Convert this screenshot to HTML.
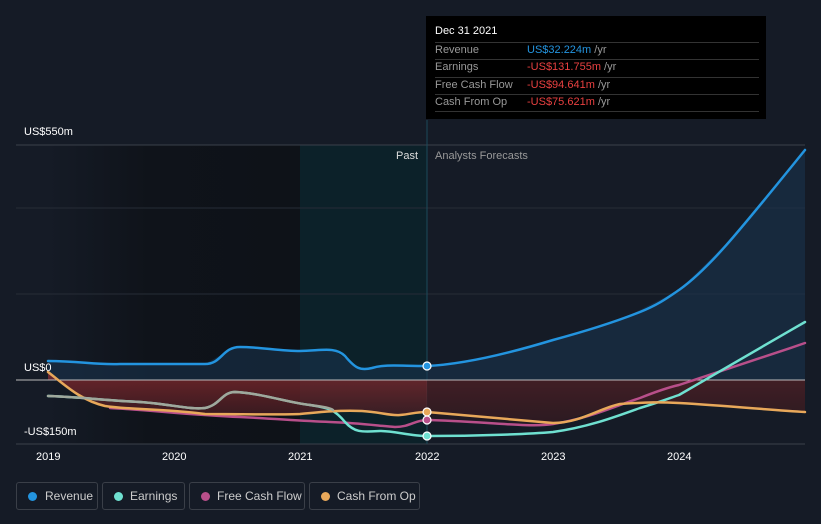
<!DOCTYPE html>
<html><head><style>
body{margin:0;width:821px;height:524px;background:#151b26;font-family:"Liberation Sans",sans-serif;overflow:hidden;position:relative}
.t{position:absolute;font-size:11px;color:#fff}
.leg{position:absolute;top:482px;height:28px;border:1px solid #3a3f48;border-radius:3px;color:#ccc;font-size:12px;line-height:27px;box-sizing:border-box;padding-left:27px;white-space:nowrap}
.leg i{position:absolute;left:11px;top:9px;width:9px;height:9px;border-radius:50%}
.tip{position:absolute;left:426px;top:16px;width:340px;height:103px;background:#000}
.tip div{position:absolute;left:9px;font-size:11px;color:#999}
.tip span{position:absolute;left:92px;white-space:nowrap}
</style></head><body>
<svg width="821" height="524" style="position:absolute;left:0;top:0">
<defs>
<linearGradient id="dk" x1="0" x2="1"><stop offset="0" stop-color="#151b26"/><stop offset="0.4" stop-color="#0f131a"/><stop offset="1" stop-color="#0e1218"/></linearGradient>
<linearGradient id="neg" x1="0" y1="0" x2="0" y2="1"><stop offset="0" stop-color="#8a2a2e"/><stop offset="1" stop-color="#3a1a20"/></linearGradient>
</defs>
<rect x="48" y="145" width="252" height="299" fill="url(#dk)"/>
<rect x="300" y="145" width="127" height="299" fill="#0c2129"/>
<line x1="16" y1="145" x2="805" y2="145" stroke="#3a404a"/>
<line x1="16" y1="208" x2="805" y2="208" stroke="#262c36"/>
<line x1="16" y1="294" x2="805" y2="294" stroke="#262c36"/>
<line x1="16" y1="444" x2="805" y2="444" stroke="#3a404a"/>
<line x1="427" y1="120" x2="427" y2="444" stroke="#1c4a5a"/>
<polygon points="48,361 80,362 110,365 174,364 205,364 235,347 300,352 333,350 362,370 395,365 427,366 480,358 553,340 620,320 679,290 740,230 805,150 805,380 48,380" fill="#1a3550" opacity="0.55"/>
<polygon points="48,380 805,380 805,412 679,403 620,404 553,423 427,412 395,415 362,411 300,414 205,414 174,410 110,408 80,395 48,372" fill="url(#neg)" opacity="0.75"/>
<polygon points="427,380 805,380 805,412 679,403 620,404 553,425 427,420" fill="#2a1a22" opacity="0.6"/>
<line x1="16" y1="380" x2="805" y2="380" stroke="#bbb" stroke-width="1"/>
<g fill="none" stroke-width="2.5" stroke-linejoin="round" stroke-linecap="round">
<path stroke="#2394df" d="M48,361 C80,361 95,365 120,364 L205,364 C222,364 222,347 240,347 C260,347 280,351 300,351 C320,351 335,346 345,356 C355,368 360,371 372,368 C385,364 400,366 427,366 C470,364 520,350 553,340 C590,330 620,320 640,312 C660,304 670,296 679,290 C710,268 740,230 805,150"/>
<path stroke="#b84f8a" d="M110,408 C150,410 190,415 240,417 C280,419 300,421 330,422 C360,423 380,426 395,427 C410,427 415,420 427,420 C480,421 530,428 553,424 C590,418 610,408 640,398 C660,390 670,387 679,385 C740,365 770,355 805,343"/>
<path stroke="#6fe0d0" d="M48,396 C80,397 100,400 140,402 C170,404 190,410 205,408 C220,405 222,392 235,392 C260,393 290,403 310,405 C330,408 335,410 345,422 C355,433 362,432 380,431 C395,431 410,436 427,436 C480,436 530,434 553,432 C590,427 620,415 640,408 C660,402 670,398 679,395 C740,360 770,342 805,322"/>
<path stroke="#e8a85a" d="M48,372 C65,385 80,400 105,406 C130,410 160,408 205,414 C240,414 280,415 300,414 C320,412 340,410 362,411 C380,412 390,416 400,415 C412,414 415,412 427,412 C480,417 520,420 553,423 C580,423 600,408 620,404 C650,402 660,402 679,403 C730,406 770,410 805,412"/>
<path stroke="#a0a89c" d="M48,396 C80,397 100,400 140,402 C170,404 190,410 205,408 C220,405 222,392 235,392 C260,393 290,403 310,405 C325,407 330,408 333,410"/>
</g>
<circle cx="427" cy="366" r="4" fill="#2394df" stroke="#fff" stroke-width="1.2"/>
<circle cx="427" cy="412" r="4" fill="#e8a85a" stroke="#fff" stroke-width="1.2"/>
<circle cx="427" cy="420" r="4" fill="#b84f8a" stroke="#fff" stroke-width="1.2"/>
<circle cx="427" cy="436" r="4" fill="#6fe0d0" stroke="#fff" stroke-width="1.2"/>
</svg>
<div class="t" style="left:24px;top:126px">US$550m</div>
<div class="t" style="left:24px;top:362px">US$0</div>
<div class="t" style="left:24px;top:426px">-US$150m</div>
<div class="t" style="left:396px;top:150px;color:#ddd">Past</div>
<div class="t" style="left:435px;top:150px;color:#999">Analysts Forecasts</div>
<div class="t" style="left:36px;top:451px">2019</div>
<div class="t" style="left:162px;top:451px">2020</div>
<div class="t" style="left:288px;top:451px">2021</div>
<div class="t" style="left:415px;top:451px">2022</div>
<div class="t" style="left:541px;top:451px">2023</div>
<div class="t" style="left:667px;top:451px">2024</div>
<div class="tip">
<div style="top:9px;color:#fff">Dec 31 2021</div>
<div style="top:26px;border-top:1px solid #333;width:324px;padding-top:1px">Revenue<span style="color:#2394df">US$32.224m <b style="font-weight:normal;color:#999">/yr</b></span></div>
<div style="top:43px;border-top:1px solid #333;width:324px;padding-top:1px">Earnings<span style="color:#e84040">-US$131.755m <b style="font-weight:normal;color:#999">/yr</b></span></div>
<div style="top:61px;border-top:1px solid #333;width:324px;padding-top:1px">Free Cash Flow<span style="color:#e84040">-US$94.641m <b style="font-weight:normal;color:#999">/yr</b></span></div>
<div style="top:78px;border-top:1px solid #333;border-bottom:1px solid #333;width:324px;padding:1px 0 3px">Cash From Op<span style="color:#e84040">-US$75.621m <b style="font-weight:normal;color:#999">/yr</b></span></div>
</div>
<div class="leg" style="left:16px;width:82px;padding-left:28px"><i style="background:#2394df"></i>Revenue</div>
<div class="leg" style="left:102px;width:83px"><i style="background:#6fe0d0"></i>Earnings</div>
<div class="leg" style="left:189px;width:116px"><i style="background:#b84f8a"></i>Free Cash Flow</div>
<div class="leg" style="left:309px;width:111px"><i style="background:#e8a85a"></i>Cash From Op</div>
</body></html>
